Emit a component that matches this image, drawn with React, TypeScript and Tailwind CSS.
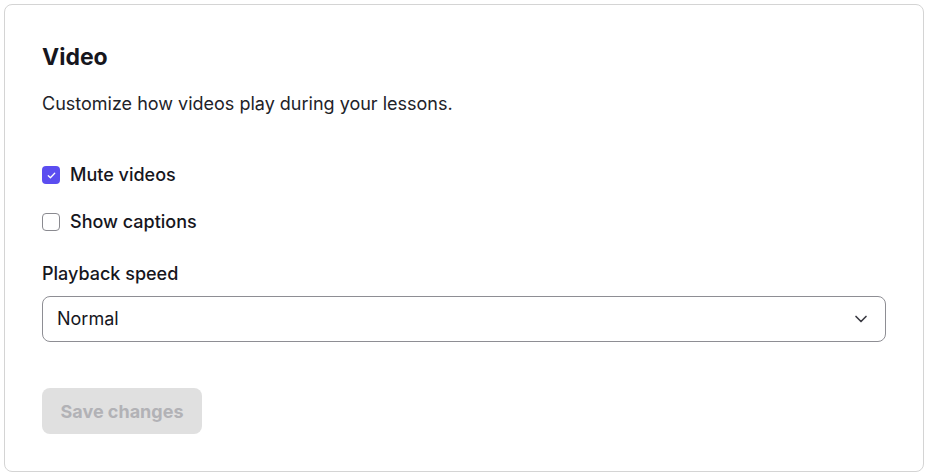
import { useState } from 'react';

export default function App() {
  const [mute, setMute] = useState(true);
  const [captions, setCaptions] = useState(false);

  return (
    <div className="min-h-screen bg-white p-1" style={{ fontFamily: 'Inter, "Noto Sans", sans-serif' }}>
      <div className="h-[468px] w-[920px] rounded-lg border border-[#d4d4d4] bg-white px-[37px] pt-[38px] text-[#16161d]">
        <h2 className="text-[23px] font-bold leading-[28px]">Video</h2>
        <p className="mt-[21px] text-[18px] leading-[24px] text-[#222228]">
          Customize how videos play during your lessons.
        </p>

        <div className="mt-[47px] flex flex-col gap-[23px]">
          <label className="flex items-center gap-[10px] text-[18px] font-medium leading-[24px]">
            <button
              onClick={() => setMute(!mute)}
              className={`flex h-[18px] w-[18px] items-center justify-center rounded-[4px] ${
                mute ? 'bg-[#5b4df0]' : 'border border-[#8a8a90] bg-white'
              }`}
            >
              {mute && (
                <svg viewBox="0 0 12 12" className="h-[11px] w-[11px]" fill="none" stroke="white" strokeWidth="1.4" strokeLinecap="round" strokeLinejoin="round">
                  <path d="M2.5 6.2l2.3 2.3 4.7-5" />
                </svg>
              )}
            </button>
            Mute videos
          </label>
          <label className="flex items-center gap-[10px] text-[18px] font-medium leading-[24px]">
            <button
              onClick={() => setCaptions(!captions)}
              className={`flex h-[18px] w-[18px] items-center justify-center rounded-[4px] ${
                captions ? 'bg-[#5b4df0]' : 'border border-[#8a8a90] bg-white'
              }`}
            />
            Show captions
          </label>
        </div>

        <div className="mt-[28px] text-[18px] font-medium leading-[24px]">Playback speed</div>
        <div className="mt-[10px] flex h-[46px] items-center justify-between rounded-lg border border-[#8e8e94] pl-[14px] pr-[14px]">
          <span className="text-[18px] leading-[24px]">Normal</span>
          <svg viewBox="0 0 24 24" className="h-[20px] w-[20px]" fill="none" stroke="#3a3a42" strokeWidth="2" strokeLinecap="round" strokeLinejoin="round">
            <path d="M6 9l6 6 6-6" />
          </svg>
        </div>

        <button
          disabled
          className="mt-[46px] h-[46px] w-[160px] rounded-lg bg-[#e0e0e0] text-[18px] font-bold text-[#b2b2b6]"
        >
          Save changes
        </button>
      </div>
    </div>
  );
}
